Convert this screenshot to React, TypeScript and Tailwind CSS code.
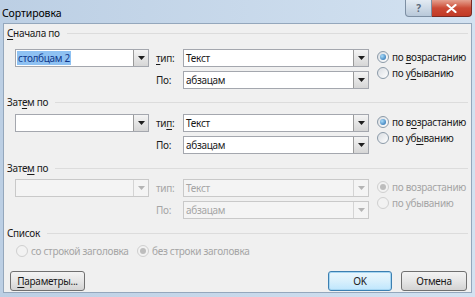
import React from 'react';

const Arrow: React.FC<{ disabled?: boolean }> = ({ disabled }) => (
  <svg width="7" height="4" viewBox="0 0 7 4">
    <path d="M0 0h7L3.5 4z" fill={disabled ? '#b4b4b4' : '#1e1e1e'} />
  </svg>
);

const Combo: React.FC<{
  value?: string;
  width: string;
  disabled?: boolean;
  selected?: boolean;
}> = ({ value, width, disabled, selected }) => (
  <div
    className={`${width} h-[18px] flex border ${
      disabled ? 'border-[#c9c9c9] bg-[#f4f4f4]' : 'border-[#a4a7ae] bg-white'
    }`}
  >
    <div className="flex-1 flex items-center pl-[1px] overflow-hidden whitespace-nowrap">
      {selected ? (
        <span className="h-[14px] leading-[14px] px-[1px] bg-[#8ec1f2] text-[#10388a]">{value}</span>
      ) : (
        <span className={`pl-[1px] ${disabled ? 'text-[#a5a5a5]' : ''}`}>{value}</span>
      )}
    </div>
    <div
      className={`w-[15px] h-full border-l flex items-center justify-center ${
        disabled
          ? 'border-[#d4d4d4] bg-[#f4f4f4]'
          : 'border-[#9a9a9a] bg-gradient-to-b from-[#f4f4f4] to-[#d6d6d6]'
      }`}
    >
      <Arrow disabled={disabled} />
    </div>
  </div>
);

const Radio: React.FC<{ checked?: boolean; disabled?: boolean; children: React.ReactNode }> = ({
  checked,
  disabled,
  children,
}) => (
  <div className={`h-[16px] flex items-center gap-[3px] whitespace-nowrap ${disabled ? 'text-[#a5a5a5]' : ''}`}>
    <div
      className={`w-[12px] h-[12px] shrink-0 rounded-full border flex items-center justify-center ${
        disabled
          ? 'border-[#cfcfcf] bg-[#f2f2f2]'
          : 'border-[#8b9aa8] bg-gradient-to-br from-[#d9dde2] to-white'
      }`}
    >
      {checked && (
        <div
          className={`w-[6px] h-[6px] rounded-full ${
            disabled ? 'bg-[#bdbdbd]' : 'bg-[radial-gradient(circle_at_35%_35%,#a8dcfb,#1d64a8)]'
          }`}
        />
      )}
    </div>
    <span>{children}</span>
  </div>
);

const GroupLabel: React.FC<{ children: React.ReactNode; className?: string }> = ({ children, className }) => (
  <div className={`h-[14px] flex items-center whitespace-nowrap ${className ?? ''}`}>
    <span className="leading-[14px]">{children}</span>
    <div className="flex-1 h-[1px] bg-[#dcdcdc] ml-[7px] mr-[3px]" />
  </div>
);

const U: React.FC<{ children: React.ReactNode }> = ({ children }) => <span className="underline underline-offset-2">{children}</span>;

const SortGroup: React.FC<{
  first?: string;
  disabled?: boolean;
  selected?: boolean;
  className?: string;
  asc: React.ReactNode;
  desc: React.ReactNode;
  typeLabel: React.ReactNode;
}> = ({ first, disabled, selected, className, asc, desc, typeLabel }) => {
  const lbl = `w-[34px] pl-[7px] whitespace-nowrap ${disabled ? 'text-[#a5a5a5]' : ''}`;
  return (
    <div className={`flex pl-[8px] ${className ?? ''}`}>
      <div className="flex flex-col gap-[4px]">
        <div className="flex items-center">
          <Combo width="w-[134px]" value={first} disabled={disabled} selected={selected} />
          <div className={lbl}>{typeLabel}</div>
          <Combo width="w-[186px]" value="Текст" disabled={disabled} />
        </div>
        <div className="flex items-center">
          <div className="w-[134px]" />
          <div className={lbl}>По:</div>
          <Combo width="w-[186px]" value="абзацам" disabled={disabled} />
        </div>
      </div>
      <div className="flex flex-col ml-[8px]">
        <Radio checked disabled={disabled}>{asc}</Radio>
        <Radio disabled={disabled}>{desc}</Radio>
      </div>
    </div>
  );
};

const App: React.FC = () => {
  return (
    <div className="w-[475px] h-[297px] flex flex-col bg-gradient-to-r from-[#bccfe4] to-[#d3e2f1] text-[10px] tracking-[-0.3px] text-[#1a1a1a] font-['Noto_Sans',sans-serif] overflow-hidden">
      {/* title bar */}
      <div className="h-[23px] flex items-start justify-between">
        <div className="pl-[2px] pt-[6px] text-[10.5px] tracking-[-0.1px] leading-[14px] text-black">Сортировка</div>
        <div className="flex pr-[3px]">
          <div className="w-[27px] h-[17px] rounded-bl-[4px] border border-t-0 border-[#7d8fa3] bg-gradient-to-b from-[#e3ebf3] to-[#b8c8d9] flex items-center justify-center text-[10px] font-bold text-[#5a6a7c]">
            ?
          </div>
          <div className="w-[40px] h-[17px] rounded-br-[4px] border border-t-0 border-l-0 border-[#7a2a22] bg-gradient-to-b from-[#e4a08f] via-[#cb4a35] to-[#c23a26] flex items-center justify-center">
            <svg width="11" height="9" viewBox="0 0 11 9">
              <path d="M1.5 1l8 7M9.5 1l-8 7" stroke="white" strokeWidth="2.2" strokeLinecap="round" />
            </svg>
          </div>
        </div>
      </div>

      {/* client area */}
      <div className="mx-[3px] h-[270px] bg-[#f0f0f0] border border-[#94a7bc] flex flex-col pl-[3px]">
        <GroupLabel className="mt-[2px]">
          <U>С</U>начала по
        </GroupLabel>
        <SortGroup
          className="mt-[9px]"
          first="столбцам 2"
          selected
          typeLabel={<><U>т</U>ип:</>}
          asc={<>по <U>в</U>озрастанию</>}
          desc={<>по у<U>б</U>ыванию</>}
        />

        <GroupLabel className="mt-[6px]">
          Зат<U>е</U>м по
        </GroupLabel>
        <SortGroup
          className="mt-[5px]"
          typeLabel={<>ти<U>п</U>:</>}
          asc={<>по в<U>о</U>зрастанию</>}
          desc={<>по уб<U>ы</U>ванию</>}
        />

        <GroupLabel className="mt-[7px]">
          Зате<U>м</U> по
        </GroupLabel>
        <SortGroup
          className="mt-[4px]"
          disabled
          typeLabel="тип:"
          asc="по возрастанию"
          desc="по убыванию"
        />

        <GroupLabel className="mt-[7px]">Список</GroupLabel>
        <div className="mt-[3px] flex pl-[9px]">
          <div className="w-[121px]">
            <Radio disabled>со строкой заголовка</Radio>
          </div>
          <Radio checked disabled>без строки заголовка</Radio>
        </div>

        <div className="mt-[12px] flex items-center pr-[4px] pl-[3px]">
          <button className="w-[75px] h-[20px] rounded-[3px] border border-[#707070] bg-gradient-to-b from-[#f3f3f3] via-[#e6e6e6] to-[#d3d3d3] leading-[18px] whitespace-nowrap">
            <U>П</U>араметры...
          </button>
          <div className="flex-1" />
          <button className="w-[64px] h-[20px] rounded-[3px] border border-[#3c7fb1] bg-gradient-to-b from-[#eaf6fd] via-[#d9f0fc] to-[#bee6fd] leading-[18px] shadow-[inset_0_0_0_1px_#a6d6f2]">
            OK
          </button>
          <button className="ml-[9px] w-[66px] h-[20px] rounded-[3px] border border-[#707070] bg-gradient-to-b from-[#f3f3f3] via-[#e6e6e6] to-[#d3d3d3] leading-[18px]">
            Отмена
          </button>
        </div>
      </div>
    </div>
  );
};

export default App;
